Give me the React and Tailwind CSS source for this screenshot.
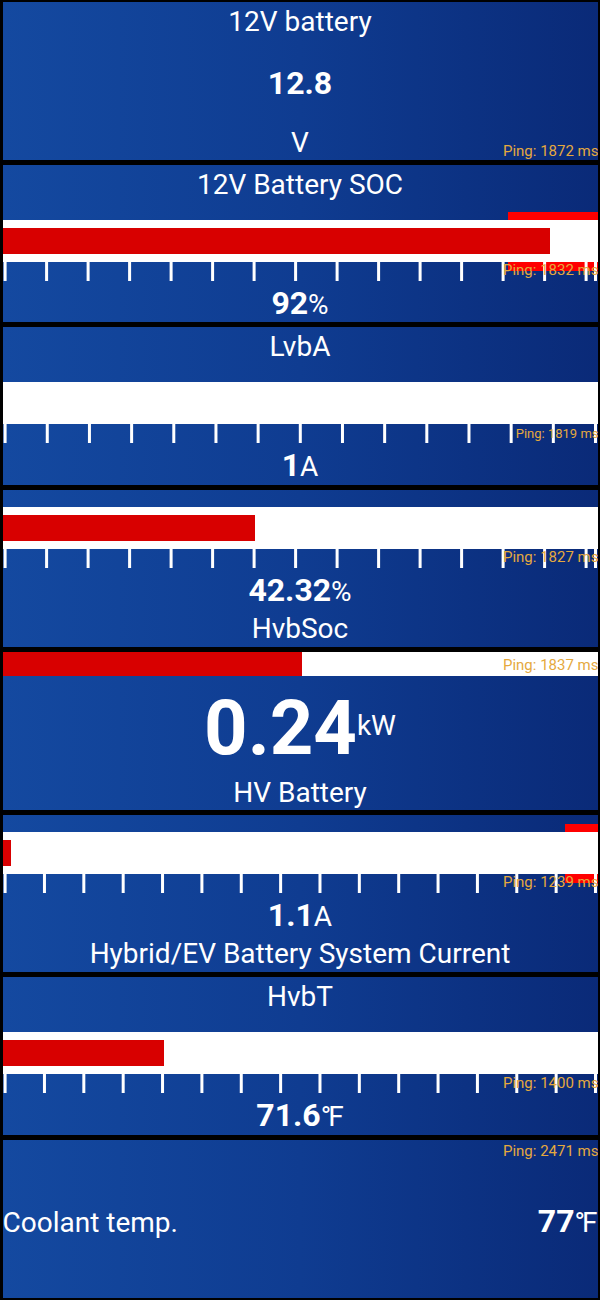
import React from 'react';

// tick x positions inside a 595px wide scale
const even = (n) => Array.from({ length: n }, (_, i) => 0.6 + (i * 590.4) / (n - 1));
const sevenths = [...Array.from({ length: 15 }, (_, i) => 0.6 + i * 41.5), 591];

const Ticks = ({ positions }) => (
  <svg className="absolute inset-0 w-full h-full" viewBox="0 0 595 19" preserveAspectRatio="none">
    {positions.map((x, i) => (
      <rect key={i} x={x} y="0" width="3" height="19" fill="#ffffff" />
    ))}
  </svg>
);

const Bar = ({ fill, marker, ticks, className = '' }) => (
  <div className={className}>
    <div className="h-[8px] flex justify-end">
      {marker && <div className="h-full bg-[#ff0000]" style={{ width: marker }} />}
    </div>
    <div className="h-[42px] bg-white py-[8px]">
      {fill > 0 && <div className="h-full bg-[#d80000]" style={{ width: fill }} />}
    </div>
    <div className="relative h-[19px]">
      {marker && <div className="absolute right-0 top-0 h-[9px] bg-[#ff0000]" style={{ width: marker }} />}
      <Ticks positions={ticks} />
    </div>
  </div>
);

const Title = ({ children, className = '' }) => (
  <div className={`text-[28px] leading-none text-center whitespace-nowrap ${className}`}>{children}</div>
);

const Fahrenheit = () => (
  <>
    <span className="-mr-[3px]">°</span>F
  </>
);

const Value = ({ value, unit, className = '' }) => (
  <div className={`flex items-baseline justify-center leading-none ${className}`}>
    <span className="text-[32px] font-bold">{value}</span>
    <span className="text-[28px]">{unit}</span>
  </div>
);

const Ping = ({ ms, className = '' }) => (
  <div className={`absolute right-[-1px] leading-none text-[#e5a93e] whitespace-nowrap ${className}`}>
    Ping: {ms} ms
  </div>
);

const Panel = ({ children }) => (
  <div className="relative flex-1 overflow-hidden bg-linear-to-r from-[#1449a0] via-[#0f3c91] to-[#0a2a78]">
    {children}
  </div>
);

export default function App() {
  return (
    <div className="h-[1300px] w-[600px] bg-black px-[2.5px] pt-[2px] pb-[2.5px] flex flex-col gap-[5px] font-['Roboto',sans-serif] text-white">
      <Panel>
        <Title className="mt-[6px]">12V battery</Title>
        <div className="mt-[31px] text-[32px] font-bold leading-none text-center">12.8</div>
        <Title className="mt-[30px]">V</Title>
        <Ping ms="1872" className="top-[142px] text-[15px]" />
      </Panel>

      <Panel>
        <Title className="mt-[6px]">12V Battery SOC</Title>
        <Bar className="mt-[13px]" fill={547} marker={90} ticks={sevenths} />
        <Value className="mt-[6px]" value="92" unit="%" />
        <Ping ms="1832" className="top-[98px] text-[15px]" />
      </Panel>

      <Panel>
        <Title className="mt-[6px]">LvbA</Title>
        <Bar className="mt-[13px]" fill={0} ticks={even(15)} />
        <Value className="mt-[6px]" value="1" unit="A" />
        <Ping ms="1819" className="top-[100px] text-[13px]" />
      </Panel>

      <Panel>
        <Bar className="mt-[9.5px]" fill={252} ticks={sevenths} />
        <Value className="mt-[6px]" value="42.32" unit="%" />
        <Title className="mt-[9px]">HvbSoc</Title>
        <Ping ms="1827" className="top-[60px] text-[15px]" />
      </Panel>

      <Panel>
        <div className="h-[23.5px] bg-white">
          <div className="h-full w-[299px] bg-[#d80000]" />
        </div>
        <div className="mt-[14.5px] text-center text-[76px] font-bold leading-none whitespace-nowrap">
          0.24<span className="text-[28px] font-normal align-[19px]">kW</span>
        </div>
        <Title className="mt-[13px]">HV Battery</Title>
        <Ping ms="1837" className="top-[6px] text-[15px]" />
      </Panel>

      <Panel>
        <Bar className="mt-[9px]" fill={8} marker={33} ticks={even(16)} />
        <Value className="mt-[6.5px]" value="1.1" unit="A" />
        <Title className="mt-[9px]">Hybrid/EV Battery System Current</Title>
        <Ping ms="1239" className="top-[60px] text-[15px]" />
      </Panel>

      <Panel>
        <Title className="mt-[6px]">HvbT</Title>
        <Bar className="mt-[13px]" fill={161} ticks={even(16)} />
        <Value className="mt-[6px]" value="71.6" unit={<Fahrenheit />} />
        <Ping ms="1400" className="top-[99px] text-[15px]" />
      </Panel>

      <Panel>
        <Ping ms="2471" className="top-[4px] text-[15px]" />
        <div className="mt-[65px] flex items-baseline justify-between leading-none">
          <span className="text-[28px] whitespace-nowrap">Coolant temp.</span>
          <span className="flex items-baseline">
            <span className="text-[32px] font-bold">77</span>
            <span className="text-[28px]">
              <Fahrenheit />
            </span>
          </span>
        </div>
      </Panel>
    </div>
  );
}
